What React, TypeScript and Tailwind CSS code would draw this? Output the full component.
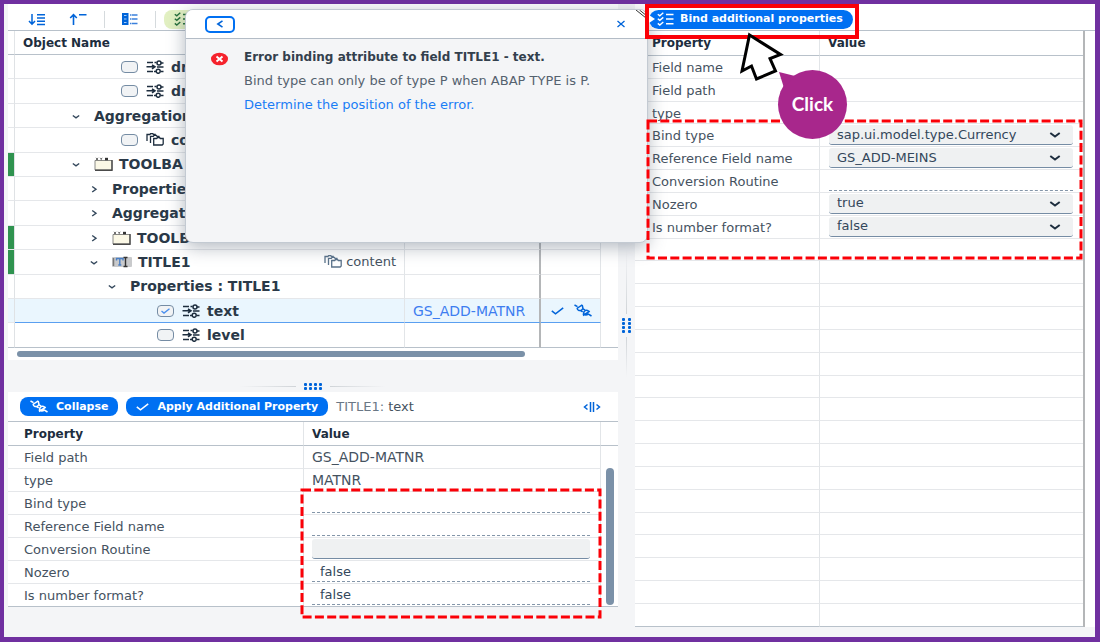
import type { ReactNode } from "react";

const propertyIcon = (
  <svg viewBox="0 0 18 14" className="h-[14px] w-[18px] shrink-0" fill="none" stroke="#1d2d3e" strokeWidth="1.500">
    <path d="M1 2.500h6M.5 6.800h8M1 11.500h6M6 4.800L9 6.800 6 8.800M8 11.500h2M11 7h6.500M15 3h2.500M14.500 11.500h3M8.500 2.500h2" />
    <circle cx="13" cy="2.900" r="2" />
    <circle cx="12.200" cy="11.300" r="2" />
  </svg>
);

function AggregationIcon({ color }: { color: string }) {
  return (
    <svg viewBox="0 0 18 13" className="h-[13px] w-[18px] shrink-0" fill="none" stroke={color} strokeWidth="1.300">
      <path d="M7.700 12V5.500h3l.8-1h2l.8 1h2.900V11l-1 1z" />
      <path d="M4.500 10V3.300h2.800l.8-1h2.200l.8 1h2.400" />
      <path d="M1 8V1.500h2.800L4.600.7h2.200l.8.8h2.200" />
    </svg>
  );
}

const toolbarIcon = (
  <svg viewBox="0 0 19 14" className="h-[14px] w-[19px] shrink-0">
    <path d="M1 3.500h17v9.500H1z" fill="#fbf8e6" stroke="#8a8a86" />
    <path d="M18 3v10.200H1" fill="none" stroke="#4a4a4a" strokeWidth="1.400" />
    <path d="M2 .8l2 2.400M4 .8L2 3.200M6.200.8l1 1.200 1-1.200M7.200 2v1.400" stroke="#666" fill="none" />
    <path d="M11 .8h3v2.500h-3z" fill="#333" />
  </svg>
);

const titleIcon = (
  <svg viewBox="0 0 20 12" className="h-3 w-5 shrink-0">
    <rect x="0" y="1" width="20" height="10" rx="1" fill="#c9cacc" />
    <path d="M1.500 2v8" stroke="#777" strokeWidth="1.500" />
    <path d="M4.500 4.500v-2h6.500v2M7.800 2.500v6.500M6.300 9h3" stroke="#4a7fc4" strokeWidth="1.400" fill="none" />
    <path d="M11.500 1.500h4M13.500 1.500v9M11.500 10.500h4" stroke="#333" strokeWidth="1.400" />
  </svg>
);

function Chevron({ open }: { open: boolean }) {
  return (
    <svg viewBox="0 0 8 8" className="h-2 w-2 shrink-0" fill="none" stroke="#33475b" strokeWidth="1.400">
      <path d={open ? "M.8 3.500l3.200 2.300L7.200 3.500" : "M2.200 1.500L6 4.200 2.200 7"} />
    </svg>
  );
}

function ListIcon({ color }: { color: string }) {
  return (
    <svg viewBox="0 0 17 14" className="h-[14px] w-[17px] shrink-0" fill="none" stroke={color} strokeWidth="1.400">
      <path d="M.8 2.200l2 1.600L6.300.8M.8 6.800l2 1.600 3.500-3M.8 11.400L2.800 13l3.500-3" />
      <path d="M9 2.500h7.500M9 7h7.500M9 11.700h7.500" />
    </svg>
  );
}

function ConnectIcon({ color }: { color: string }) {
  return (
    <svg viewBox="0 0 18 13" className="h-[13px] w-[18px] shrink-0" fill="none" stroke={color} strokeWidth="1.500">
      <path d="M.5 1l3 1.600M14 9.800l3.500 2.200M2.800 4.500L8.300.8" />
      <path d="M3.300 4.200C3 6.500 5.500 7 7.500 6.200L9 4.500 8.200 1M6.500 6.500l2.200 1.400M9 4.800l2.200 1.400" />
      <path d="M9.300 11L10 7.700c1.500-1.900 4-1.900 4.800.3M9 11.500l6.800-4.400M10 10.500c1.500 1 3 .6 4.500-.6" />
    </svg>
  );
}

const checkIcon = (
  <svg viewBox="0 0 13 8" className="h-2 w-[13px] shrink-0" fill="none" stroke="currentColor" strokeWidth="1.500">
    <path d="M.8 3.800l3.700 3L12.200.8" />
  </svg>
);

type Node = { label: string; pad: string; kind: "prop" | "agg" | "toolbar" | "title" | "plain"; open?: boolean; checked?: boolean; bar?: boolean };

const nodes: Node[] = [
  { label: "dr", pad: "pl-[106px]", kind: "prop" },
  { label: "dr", pad: "pl-[106px]", kind: "prop" },
  { label: "Aggregation", pad: "pl-[57px]", kind: "plain", open: true },
  { label: "co", pad: "pl-[106px]", kind: "agg" },
  { label: "TOOLBA", pad: "pl-[57px]", kind: "toolbar", open: true, bar: true },
  { label: "Properties", pad: "pl-[75px]", kind: "plain", open: false },
  { label: "Aggregat", pad: "pl-[75px]", kind: "plain", open: false },
  { label: "TOOLB", pad: "pl-[75px]", kind: "toolbar", open: false, bar: true },
  { label: "TITLE1", pad: "pl-[75px]", kind: "title", open: true, bar: true },
  { label: "Properties : TITLE1", pad: "pl-[93px]", kind: "plain", open: true },
  { label: "text", pad: "pl-[142px]", kind: "prop", checked: true },
  { label: "level", pad: "pl-[142px]", kind: "prop" },
];

function TreeCell({ node }: { node: Node }) {
  const leaf = node.kind === "prop" || node.kind === "agg";
  return (
    <div className={"flex h-4 items-center whitespace-nowrap " + node.pad}>
      {leaf ? (
        <label className="flex items-center">
          <span className="relative mr-2 flex h-3 w-[17px]">
            <input
              type="checkbox"
              defaultChecked={node.checked}
              className="h-3 w-[17px] appearance-none rounded-[4px] border border-[#758ca4] bg-[#f1f3f5]"
            />
            {node.checked && (
              <svg viewBox="0 0 9 6" className="pointer-events-none absolute top-[3px] left-1 h-1.5 w-[9px]" fill="none" stroke="#4a90ef" strokeWidth="1.400">
                <path d="M.5 3l2.500 2L8.500.7" />
              </svg>
            )}
          </span>
          {node.kind === "prop" ? propertyIcon : <AggregationIcon color="#1d2d3e" />}
          <span className="pl-[7px]">{node.label}</span>
        </label>
      ) : (
        <>
          <button type="button" aria-label={node.open ? "Close node" : "Open node"} className="mr-3.5 flex">
            <Chevron open={!!node.open} />
          </button>
          {node.kind === "toolbar" && <span className="mr-1.5">{toolbarIcon}</span>}
          {node.kind === "title" && <span className="mr-1.5">{titleIcon}</span>}
          <span>{node.label}</span>
        </>
      )}
    </div>
  );
}

function ObjectTree() {
  return (
    <table className="h-[317px] w-full table-fixed border-separate border-spacing-0 text-left">
      <colgroup>
        <col className="w-[7px]" />
        <col />
        <col className="w-[136px]" />
        <col className="w-[60px]" />
        <col className="w-[17px]" />
      </colgroup>
      <thead className="text-xs text-[#1d2d3e]">
        <tr className="h-6">
          <th className="border-r border-b border-r-[#e2e5e8] border-b-[#b8c1ca] p-0" />
          <th className="border-b border-[#b8c1ca] p-0 pl-2">Object Name</th>
          <th className="border-b border-[#b8c1ca] p-0" />
          <th className="border-b border-[#b8c1ca] p-0" />
          <th className="border-b border-[#b8c1ca] p-0" />
        </tr>
      </thead>
      <tbody>
        {nodes.map((n, i) => {
          const last = i === nodes.length - 1;
          const line = n.checked ? "border-b-[#5a9ff0] " : last ? "border-b-[#b8c1ca] " : "border-b-[#e5e7ea] ";
          const bg = n.checked ? "bg-[#eaf6fe] " : "";
          return (
            <tr key={i} className="h-6">
              <td
                className={
                  "border-r border-b border-r-[#dfe2e5] p-0 " +
                  (n.bar ? "bg-[#2f934f] " : bg) +
                  (last ? "border-b-[#b8c1ca]" : "border-b-[#e5e7ea]")
                }
              />
              <td className={"border-r border-b border-r-[#e2e5e8] p-0 text-sm leading-4 font-bold text-[#2a3948] " + line + bg}>
                <div className="flex items-center justify-between">
                  <TreeCell node={n} />
                  {n.kind === "title" && (
                    <span className="flex items-center gap-1 pr-2 text-[13px] leading-4 font-normal text-[#45525f]">
                      <AggregationIcon color="#5b738b" />
                      content
                    </span>
                  )}
                </div>
              </td>
              <td className={"border-r-2 border-b border-r-[#b4b6b8] p-0 pl-2 text-sm leading-4 text-[#3d7df0] " + line + bg}>
                {n.checked && <a href="#field">GS_ADD-MATNR</a>}
              </td>
              <td className={"border-r border-b border-r-[#e2e5e8] p-0 " + line + bg}>
                {n.checked && (
                  <div className="flex items-center gap-2.5 pl-2.5 text-[#0064d9]">
                    {checkIcon}
                    <ConnectIcon color="#0064d9" />
                  </div>
                )}
              </td>
              <td className={"p-0 " + (last ? "border-b border-[#b8c1ca]" : "")} />
            </tr>
          );
        })}
      </tbody>
    </table>
  );
}

const flatField = "block h-5 w-full border-b border-dashed border-[#8496a9] bg-transparent px-2 text-[13px] text-[#33475b] outline-none";
const filledField = "block h-5 w-full appearance-none rounded-[3px] border-b border-[#758ca4] bg-[#eff1f2] px-2 text-[13px] text-[#33475b] outline-none";

const lowerRows: { label: string; field: ReactNode }[] = [
  { label: "Field path", field: <span className="text-sm leading-4">GS_ADD-MATNR</span> },
  { label: "type", field: <span className="text-sm leading-4">MATNR</span> },
  { label: "Bind type", field: <input aria-label="Bind type" className={flatField} /> },
  { label: "Reference Field name", field: <input aria-label="Reference Field name" className={flatField} /> },
  { label: "Conversion Routine", field: <input aria-label="Conversion Routine" className={filledField} /> },
  { label: "Nozero", field: <input aria-label="Nozero" defaultValue="false" className={flatField} /> },
  { label: "Is number format?", field: <input aria-label="Is number format?" defaultValue="false" className={flatField} /> },
];

function LowerTable() {
  return (
    <table className="h-[185px] w-full table-fixed border-separate border-spacing-0 text-left">
      <colgroup>
        <col className="w-[296px]" />
        <col />
        <col className="w-[17px]" />
      </colgroup>
      <thead className="text-xs text-[#1d2d3e]">
        <tr className="h-6">
          <th className="border-r border-b border-r-[#e2e5e8] border-b-[#b8c1ca] p-0 pl-4">Property</th>
          <th className="border-r border-b border-r-[#e2e5e8] border-b-[#b8c1ca] p-0 pl-2">Value</th>
          <th className="border-b border-[#b8c1ca] p-0" />
        </tr>
      </thead>
      <tbody className="text-[13px] leading-4 text-[#45525f]">
        {lowerRows.map((r, i) => {
          const line = i === 6 ? "border-b-[#b8c1ca] " : "border-b-[#e5e7ea] ";
          return (
            <tr key={r.label} className="h-[22px]">
              <td className={"border-r border-b border-r-[#e2e5e8] p-0 pt-0.5 pl-4 " + line}>{r.label}</td>
              <td className={"border-r border-b border-r-[#e2e5e8] p-0 pr-2.5 pl-2 " + line}>{r.field}</td>
              {i === 0 && (
                <td rowSpan={7} className="border-b border-[#b8c1ca] p-0 align-bottom">
                  <div className="mx-auto mb-px h-[137px] w-2 rounded-full bg-[#7b91a8]" />
                </td>
              )}
            </tr>
          );
        })}
      </tbody>
    </table>
  );
}

function Select({ label, value }: { label: string; value: string }) {
  return (
    <div className="relative">
      <select aria-label={label} defaultValue={value} className={filledField}>
        <option>{value}</option>
      </select>
      <svg viewBox="0 0 12 8" className="pointer-events-none absolute top-1.5 right-3 h-2 w-3" fill="none" stroke="#1d2d3e" strokeWidth="2">
        <path d="M1.300 2l4.700 3.500L10.700 2" />
      </svg>
    </div>
  );
}

const sideRows: { label: string; field?: ReactNode }[] = [
  { label: "Field name" },
  { label: "Field path" },
  { label: "type" },
  { label: "Bind type", field: <Select label="Bind type" value="sap.ui.model.type.Currency" /> },
  { label: "Reference Field name", field: <Select label="Reference Field name" value="GS_ADD-MEINS" /> },
  { label: "Conversion Routine", field: <input aria-label="Conversion Routine" className={flatField} /> },
  { label: "Nozero", field: <Select label="Nozero" value="true" /> },
  { label: "Is number format?", field: <Select label="Is number format?" value="false" /> },
  ...Array.from({ length: 17 }, () => ({ label: "" })),
];

function SideTable() {
  return (
    <table className="h-[596px] w-full table-fixed border-separate border-spacing-0 border-r-2 border-[#b4b6b8] text-left">
      <colgroup>
        <col className="w-[185px]" />
        <col />
      </colgroup>
      <thead className="text-xs text-[#1d2d3e]">
        <tr className="h-[25px]">
          <th className="border-r border-b border-r-[#e2e5e8] border-b-[#b8c1ca] p-0 pl-[17px]">Property</th>
          <th className="border-b border-[#b8c1ca] p-0 pl-2">Value</th>
        </tr>
      </thead>
      <tbody className="text-[13px] leading-4 text-[#45525f]">
        {sideRows.map((r, i) => {
          const line = i === sideRows.length - 1 ? "border-b-[#b8c1ca] " : "border-b-[#e5e7ea] ";
          return (
            <tr key={i} className="h-[22px]">
              <td className={"border-r border-b border-r-[#e2e5e8] p-0 pt-0.5 pl-[17px] " + line}>{r.label}</td>
              <td className={"border-b p-0 pr-2.5 pl-[9px] " + line}>{r.field}</td>
            </tr>
          );
        })}
      </tbody>
    </table>
  );
}

function MessageDialog() {
  return (
    <section
      role="dialog"
      aria-label="Message"
      className="absolute top-[5px] left-[181px] flex h-[234px] w-[463px] flex-col overflow-hidden rounded-lg border border-[#c3cad2] bg-[#f4f5f7] shadow-[0_4px_18px_rgba(60,75,95,0.4)]"
    >
      <header className="flex h-[29px] shrink-0 items-center justify-between border-b border-[#b3bcc6] bg-white pr-[21px] pl-[19px]">
        <button type="button" aria-label="Back" className="flex h-[17px] w-[30px] items-center justify-center rounded-[5px] border-2 border-[#0070f2]">
          <svg viewBox="0 0 8 8" className="h-2 w-2" fill="none" stroke="#0064d9" strokeWidth="1.600">
            <path d="M6.500.8L1.800 4l4.700 3.200" />
          </svg>
        </button>
        <button type="button" aria-label="Close">
          <svg viewBox="0 0 10 8" className="h-2 w-2.5" fill="none" stroke="#0064d9" strokeWidth="1.300">
            <path d="M1.500 1l7 6M8.500 1l-7 6" />
          </svg>
        </button>
      </header>
      <svg viewBox="0 0 12 8" className="pointer-events-none absolute top-0 right-0 h-2 w-3" fill="none" stroke="#333" strokeWidth="1">
        <path d="M1 0l10 8M4.500 0L12 6M8 0l4 3.300" />
      </svg>
      <div className="flex gap-4 pt-2.5 pl-[25px]">
        <svg viewBox="0 0 17 14" className="mt-[3px] h-[14px] w-[17px]">
          <ellipse cx="8.500" cy="7" rx="8.500" ry="6.300" fill="#f5232d" />
          <path d="M5.500 4.500l6 5M11.500 4.500l-6 5" stroke="#fff" strokeWidth="2" />
        </svg>
        <div className="text-[13px] leading-4 text-[#55626f]">
          <p className="text-xs leading-4 font-bold text-[#33404d]">Error binding attribute to field TITLE1 - text.</p>
          <p className="mt-2">Bind type can only be of type P when ABAP TYPE is P.</p>
          <a href="#error" className="mt-2 block text-[#1a7df5]">
            Determine the position of the error.
          </a>
        </div>
      </div>
    </section>
  );
}

function Dots({ className }: { className: string }) {
  return (
    <div className={className}>
      {Array.from({ length: 8 }, (_, i) => (
        <span key={i} className="h-[3px] w-[3px] rounded-[1px] bg-[#0064d9]" />
      ))}
    </div>
  );
}

function DashedFrame({ className }: { className: string }) {
  return (
    <svg className={"pointer-events-none absolute " + className} overflow="visible">
      <rect x="0" y="0" width="100%" height="100%" fill="none" stroke="#fb0007" strokeWidth="3" strokeDasharray="9 3.300" />
    </svg>
  );
}

export default function App() {
  return (
    <div className="relative min-h-screen border-4 border-r-[5px] border-b-[5px] border-[#7030a0] bg-[#f4f5f7] font-['DejaVu_Sans',sans-serif]">
      <div className="flex">
        <main className="ml-1 flex min-w-0 flex-[610] flex-col">
          <div className="bg-white">
            <div className="flex h-[27px] items-center border-b border-[#b8c1ca] pt-1 pl-5">
              <button type="button" aria-label="Expand all">
                <svg viewBox="0 0 17 13" className="h-[13px] w-[17px]" fill="none" stroke="#0064d9" strokeWidth="1.500">
                  <path d="M4 1v10M1 8l3 3.200L7 8M9 1.800h8M9 5h8M9 8.200h8M9 11.400h8" />
                </svg>
              </button>
              <button type="button" aria-label="Collapse all" className="ml-6">
                <svg viewBox="0 0 18 13" className="h-[13px] w-[18px]" fill="none" stroke="#0064d9" strokeWidth="1.600">
                  <path d="M4.500 12V2M1.200 5l3.300-3.300L7.800 5M10 1.800h7.500" />
                </svg>
              </button>
              <span className="mx-[17px] h-[17px] w-px bg-[#d5dadd]" />
              <button type="button" aria-label="Details">
                <svg viewBox="0 0 16 12" className="h-3 w-4">
                  <path d="M0 0h6.500v12H0z" fill="#0064d9" />
                  <path d="M2 2.500h2.500M2 6h2.500M2 9.500h2.500" stroke="#a9cdf7" />
                  <path d="M8 2h1.500M8 6h1.500M8 10.500h1.500M10 2h5.500M10 6h5.500M10 10.500h5.500" stroke="#3a80dc" strokeWidth="1.500" />
                </svg>
              </button>
              <span className="mr-2 ml-[17px] h-[17px] w-px bg-[#d5dadd]" />
              <button type="button" aria-label="Select properties" className="flex h-[19px] w-10 items-center rounded-lg bg-[#e2f0c2] pl-2.5">
                <ListIcon color="#256f3a" />
              </button>
            </div>
            <ObjectTree />
            <div className="h-3 pt-[3px] pl-[9px]">
              <div className="h-1.5 w-[508px] rounded-full bg-[#7b91a8]" />
            </div>
          </div>

          <div className="flex h-8 items-center justify-center gap-2 pt-5">
            <span className="h-px w-14 bg-linear-to-l from-[#d0d4d8] to-transparent" />
            <Dots className="grid grid-cols-4 gap-x-[2px] gap-y-px" />
            <span className="h-px w-14 bg-linear-to-r from-[#d0d4d8] to-transparent" />
          </div>

          <div className="bg-white">
            <div className="flex h-[30px] items-center border-b border-[#b8c1ca] pr-[17px] pl-3">
              <button type="button" className="flex h-[19px] items-center gap-2 rounded-lg bg-[#0070f2] px-2.5 text-[11px] leading-4 font-bold text-white">
                <ConnectIcon color="#fff" />
                Collapse
              </button>
              <button type="button" className="ml-2 flex h-[19px] items-center gap-2 rounded-lg bg-[#0070f2] px-2.5 text-[11px] leading-4 font-bold text-white">
                {checkIcon}
                Apply Additional Property
              </button>
              <span className="ml-2 text-[13px] leading-4 text-[#6a7785]">
                TITLE1: <span className="text-[#45525f]">text</span>
              </span>
              <button type="button" aria-label="Resize columns" className="ml-auto">
                <svg viewBox="0 0 18 12" className="h-3 w-[18px]" fill="none" stroke="#0064d9" strokeWidth="1.500">
                  <path d="M4.500 3.500L1.500 6l3 2.500M13.500 3.500l3 2.500-3 2.500M7.500 1v10M10.500 1v10" />
                </svg>
              </button>
            </div>
            <LowerTable />
          </div>
        </main>

        <div className="flex w-[17px] shrink-0 flex-col items-center gap-1 pt-[246px]">
          <span className="h-16 w-px bg-linear-to-t from-[#d0d4d8] to-transparent" />
          <Dots className="grid grid-cols-2 gap-x-[3px] gap-y-px" />
          <span className="h-10 w-px bg-linear-to-b from-[#d0d4d8] to-transparent" />
        </div>

        <aside className="min-w-0 flex-[460] bg-white">
          <div className="flex h-[27px] items-center border-b border-[#b8c1ca] pl-[14px]">
            <button type="button" className="relative z-10 mt-1 flex h-[19px] items-center gap-1.5 rounded-full bg-[#0070f2] px-2 pr-2.5 text-[11px] leading-4 font-bold text-white">
              <svg viewBox="0 0 6 8" className="absolute left-0 h-2 w-1.5" fill="#fff">
                <path d="M0 0l6 4-6 4z" />
              </svg>
              <ListIcon color="#fff" />
              Bind additional properties
            </button>
          </div>
          <div className="pr-2.5">
            <SideTable />
          </div>
          <div className="h-2 bg-[#f4f5f7]" />
        </aside>
      </div>

      <MessageDialog />

      <div className="pointer-events-none absolute top-0 left-[641px] z-20 h-[35px] w-[214px] border-4 border-[#fb0007]" />
      <DashedFrame className="top-[117px] left-[644px] h-[137px] w-[433px]" />
      <DashedFrame className="top-[486px] left-[298px] h-[127px] w-[298px]" />

      <svg viewBox="0 0 44 50" className="pointer-events-none absolute top-7 left-[736px] z-20 h-[50px] w-11">
        <path d="M9.500 3L40.500 22.500 30 26.500 35.500 39 16.500 47 11.500 34 2 39z" fill="#fff" stroke="#000" strokeWidth="3" />
      </svg>
      <div className="pointer-events-none absolute top-[66px] left-[774px] z-20 flex h-[69px] w-[69px] items-center justify-center">
        <svg viewBox="0 0 69 69" className="absolute inset-0 overflow-visible" fill="#a8278c">
          <circle cx="34.500" cy="34.500" r="34.500" />
          <path d="M1 2L17 6 6 18z" />
        </svg>
        <span className="relative font-[Lato,sans-serif] text-[19px] font-bold text-white">Click</span>
      </div>
    </div>
  );
}
